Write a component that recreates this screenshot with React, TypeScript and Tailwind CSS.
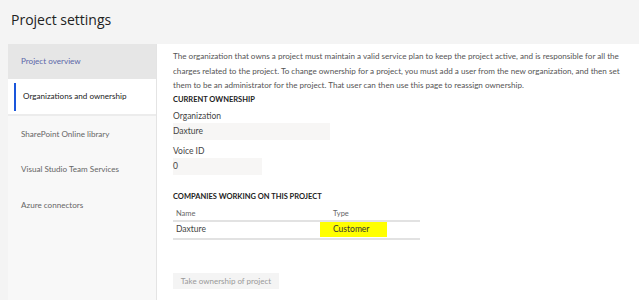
const navItems = [
  { label: "Project overview", state: "hover" },
  { label: "Organizations and ownership", state: "active" },
  { label: "SharePoint Online library", state: "" },
  { label: "Visual Studio Team Services", state: "" },
  { label: "Azure connectors", state: "" },
];

const intro = [
  "The organization that owns a project must maintain a valid service plan to keep the project active, and is responsible for all the",
  "charges related to the project. To change ownership for a project, you must add a user from the new organization, and then set",
  "them to be an administrator for the project. That user can then use this page to reassign ownership.",
];

export default function App() {
  return (
    <div className="w-[639px] h-[300px] overflow-hidden bg-[#f4f4f4] font-['Lato',sans-serif]">
      <h1 className="h-[44px] pl-[11px] pt-[10px] text-[14px] text-[#222] leading-[20px] font-['Open_Sans',sans-serif]">
        Project settings
      </h1>
      <div className="flex h-[256px]">
        {/* Sidebar */}
        <nav className="ml-[8px] w-[149px] shrink-0 bg-[#f8f8f8] border-r border-[#e4e4e4]">
          {navItems.map((item) => (
            <div
              key={item.label}
              className={
                item.state === "hover"
                  ? "h-[35px] flex items-center pl-[13px] bg-[#e6e6e6] text-[8.1px] text-[#5b67a8]"
                  : item.state === "active"
                  ? "h-[37px] flex items-center pl-[6px] bg-white border-b-2 border-[#ececec] text-[8.1px] text-[#222]"
                  : "h-[35.5px] flex items-center pl-[13px] text-[8.1px] text-[#666]"
              }
            >
              {item.state === "active" && (
                <span className="w-[2px] h-[28px] bg-[#1a56db] mr-[7px]" />
              )}
              {item.label}
            </div>
          ))}
        </nav>

        {/* Main */}
        <main className="flex-1 min-w-0 bg-white pl-[16px] pr-[8px] pt-[5px] text-[8.5px] text-[#444]">
          <div className="leading-[14.5px] text-[#555] text-[8.1px]">
            {intro.map((line) => (
              <div key={line} className="whitespace-nowrap">
                {line}
              </div>
            ))}
          </div>

          <h2 className="mt-[2px] text-[7.5px] font-bold text-[#222] uppercase leading-[10px]">
            Current ownership
          </h2>
          <div className="mt-[6px] text-[8.5px] text-[#444] leading-[11px]">Organization</div>
          <div className="mt-[1px] w-[157px] h-[17px] bg-[#f7f6f5] flex items-center text-[8.5px] text-[#444]">
            Daxture
          </div>
          <div className="mt-[6px] text-[8.5px] text-[#444] leading-[11px]">Voice ID</div>
          <div className="mt-[1px] w-[89px] h-[17px] bg-[#f7f6f5] flex items-center text-[8.5px] text-[#444]">
            0
          </div>

          <h2 className="mt-[17px] text-[7.5px] font-bold text-[#222] uppercase leading-[10px]">
            Companies working on this project
          </h2>
          <div className="mt-[7px] w-[247px]">
            <div className="flex h-[13px] items-center border-b-2 border-[#e2e2e2] text-[7.5px] text-[#666]">
              <div className="w-[160px] pl-[3px]">Name</div>
              <div>Type</div>
            </div>
            <div className="flex h-[18px] items-center border-b-2 border-[#e2e2e2] text-[8.5px] text-[#444]">
              <div className="w-[147px] pl-[3px]">Daxture</div>
              <div className="w-[67px] h-[15px] bg-[#ffff00] pl-[13px] flex items-center text-[#333]">
                Customer
              </div>
            </div>
          </div>

          <button className="mt-[33px] w-[106px] h-[16px] bg-[#f4f4f4] text-[8px] text-[#999]">
            Take ownership of project
          </button>
        </main>
      </div>
    </div>
  );
}
